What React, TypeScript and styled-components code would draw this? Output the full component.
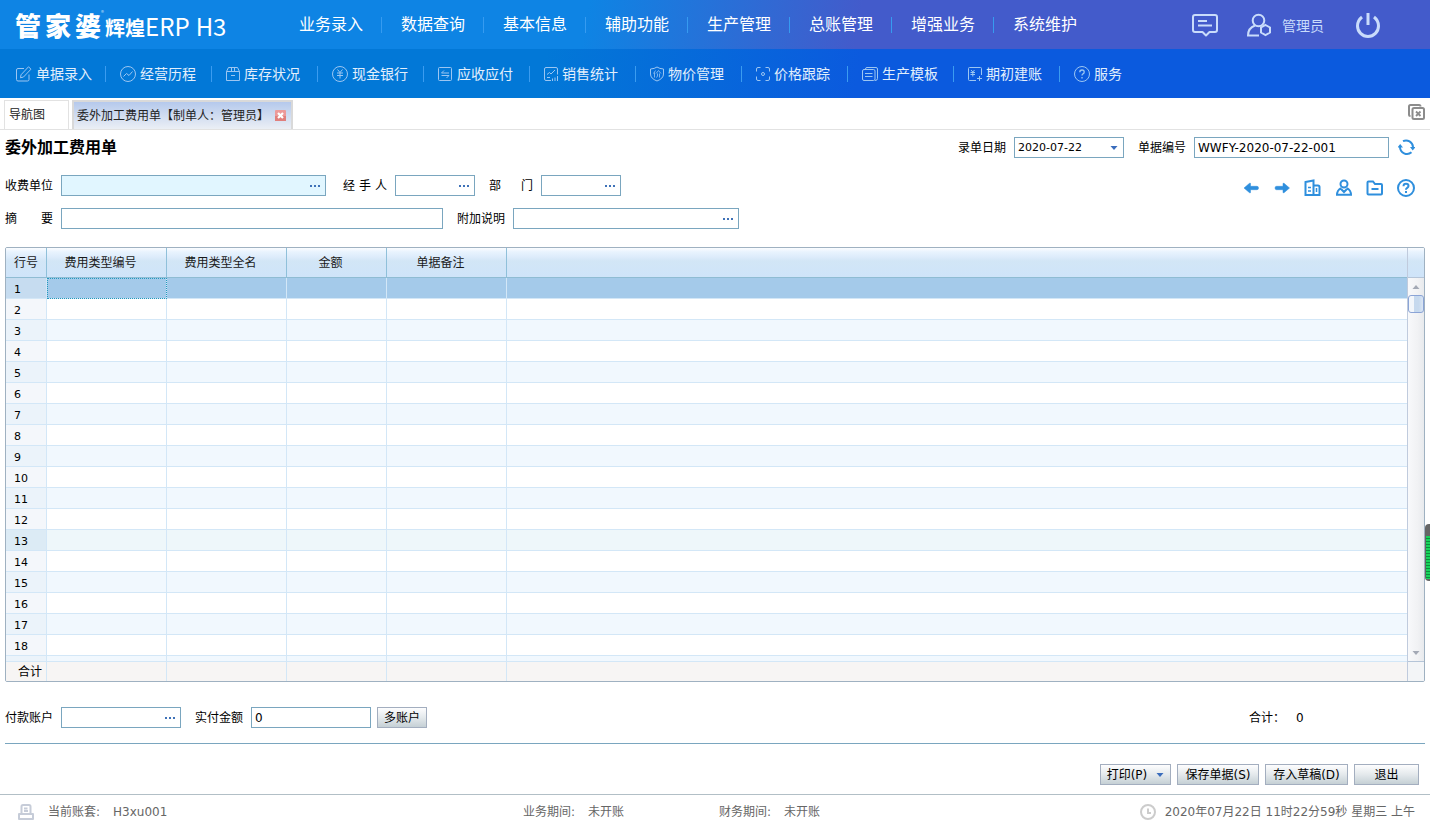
import React from "react";
import styled, { createGlobalStyle } from "styled-components";

const GlobalStyle = createGlobalStyle`
  * { box-sizing: border-box; }
  html, body { margin: 0; padding: 0; background: #fff; }
  body, button, input, select, table {
    font-family: "DejaVu Sans", "Noto Sans CJK SC", sans-serif;
    font-size: 12px;
    line-height: 16px;
    color: #000;
  }
  body { overflow-x: hidden; }
  button, input, select { margin: 0; border-radius: 0; }
  button { cursor: pointer; }
  svg { display: block; flex: none; }
`;

const Page = styled.div`
  display: flex;
  flex-direction: column;
  min-height: 100vh;
`;

/* ---------- header ---------- */
const TopBar = styled.header`
  display: flex;
  align-items: center;
  height: 49px;
  background: linear-gradient(100deg, #0e84e4 0%, #0e84e4 41%, #435bcb 60%, #435bcb 100%);
`;

const Logo = styled.h1`
  display: flex;
  align-items: center;
  width: 278px;
  margin: 0;
  padding-left: 15px;
  color: #fff;
  font-family: "Noto Sans CJK SC", sans-serif;
  font-weight: 400;
  line-height: 32px;
  white-space: nowrap;
`;

const Brand = styled.span`
  display: flex;
  gap: 4px;
  font-size: 26px;
  font-weight: 900;
`;

const Registered = styled.sup`
  align-self: flex-start;
  width: 4px;
  font-size: 6px;
  line-height: 16px;
  opacity: 0.7;
`;

const Product = styled.span`
  display: flex;
  align-items: baseline;
  padding-top: 5px;
  font-size: 24px;
`;

const ProductCjk = styled.span`
  font-size: 20px;
  font-weight: 700;
`;

const Edition = styled.span`
  margin-left: 6px;
`;

const MainNav = styled.nav`
  display: flex;
  padding-bottom: 3px;
`;

const MainLink = styled.a`
  position: relative;
  width: 102px;
  padding-left: 21px;
  color: #fff;
  font-family: "Noto Sans CJK SC", sans-serif;
  font-size: 16px;
  line-height: 24px;
  text-decoration: none;
  white-space: nowrap;

  & + &::before {
    content: "";
    position: absolute;
    left: 1px;
    top: 6px;
    width: 1px;
    height: 16px;
    background: #369bf0;
  }
`;

const UserTools = styled.div`
  display: flex;
  align-items: center;
  margin-left: auto;
  padding-right: 49px;
`;

const UserButton = styled.button<{ $gap?: number }>`
  display: flex;
  align-items: center;
  gap: 10px;
  margin-left: ${(p) => p.$gap ?? 0}px;
  padding: 0;
  border: 0;
  background: none;
  color: #c9dcfb;
  font-family: "Noto Sans CJK SC", sans-serif;
  font-size: 14px;
  line-height: 24px;
`;

const SubNav = styled.nav`
  display: flex;
  align-items: center;
  height: 49px;
  background: linear-gradient(100deg, #0278d7 0%, #0278d7 38%, #0b5ade 60%, #0b5ade 100%);
`;

const SubLink = styled.a`
  position: relative;
  display: flex;
  align-items: center;
  gap: 4px;
  width: 106px;
  padding-left: 15px;
  color: #e2effc;
  font-family: "Noto Sans CJK SC", sans-serif;
  font-size: 14px;
  line-height: 22px;
  padding-bottom: 2px;
  text-decoration: none;
  white-space: nowrap;

  svg { position: relative; top: 1px; color: #9cc6f2; }

  &:first-child { width: 105px; }

  & + &::before {
    content: "";
    position: absolute;
    left: 0;
    top: 4px;
    width: 1px;
    height: 16px;
    background: #3b9cf0;
  }
`;

/* ---------- tabs ---------- */
const TabBar = styled.div`
  display: flex;
  align-items: flex-end;
  gap: 3px;
  height: 32px;
  padding-left: 4px;
  border-bottom: 1px solid #e2e2e2;
`;

const Tab = styled.div<{ $active?: boolean }>`
  display: flex;
  align-items: center;
  gap: 6px;
  height: 29px;
  min-width: 65px;
  padding: 0 5px 0 4px;
  border: ${(p) => (p.$active ? "2px solid #d9d9d9" : "1px solid #e2e2e2")};
  border-bottom: 0;
  background: ${(p) => (p.$active ? "linear-gradient(#b5c9ec, #ebeff5)" : "#fff")};
  ${(p) => p.$active && "padding-left: 3px;"}
`;

const TabLabel = styled.button`
  padding: 0;
  border: 0;
  background: none;
  color: #222;
  white-space: nowrap;
`;

const IconButton = styled.button`
  display: flex;
  padding: 0;
  border: 0;
  background: none;
  color: #2f8fdd;
`;

const CloseAll = styled(IconButton)`
  margin: 0 5px 9px auto;
  color: #8c8c8c;
`;

/* ---------- form ---------- */
const Main = styled.main`
  display: flex;
  flex-direction: column;
  padding: 0 5px;
`;

const TitleRow = styled.div`
  display: flex;
  align-items: center;
  height: 35px;
`;

const Title = styled.h2`
  margin: 0 auto 0 0;
  font-size: 16px;
  line-height: 24px;
  font-weight: 700;
`;

const FormRow = styled.div<{ $top?: number }>`
  display: flex;
  align-items: center;
  height: 21px;
  margin-top: ${(p) => p.$top ?? 12}px;
`;

const Field = styled.div<{ $gap?: number }>`
  display: flex;
  align-items: center;
  gap: 8px;
  margin-right: ${(p) => p.$gap ?? 0}px;
`;

const Label = styled.label<{ $width?: number }>`
  width: ${(p) => p.$width ?? 48}px;
  white-space: nowrap;
  text-align: justify;
  text-align-last: justify;
`;

const Box = styled.div<{ $width: number; $required?: boolean }>`
  display: flex;
  align-items: center;
  width: ${(p) => p.$width}px;
  height: 21px;
  border: 1px solid #7aa6bf;
  background: ${(p) => (p.$required ? "#e1f6ff" : "#fff")};
`;

const TextInput = styled.input`
  flex: 1;
  min-width: 0;
  height: 19px;
  padding: 0 3px;
  border: 0;
  outline: 0;
  background: transparent;
`;

const LookupButton = styled.button`
  display: flex;
  align-items: center;
  height: 19px;
  padding: 0 5px 0 3px;
  border: 0;
  background: none;
`;

const DateSelect = styled.select`
  flex: 1;
  min-width: 0;
  height: 19px;
  padding: 0 3px;
  border: 0;
  outline: 0;
  appearance: none;
  font-size: 11px;
  background: transparent;
`;

const ArrowSlot = styled.span`
  padding: 0 5px;
`;

const Tools = styled.div`
  display: flex;
  align-items: center;
  gap: 11px;
  margin-left: auto;
  padding: 4px 9px 0 0;
`;

/* ---------- grid ---------- */
const GridFrame = styled.div`
  display: flex;
  margin-top: 18px;
  border: 1px solid #9fb1c1;
  border-radius: 2px;
  overflow: hidden;
`;

const headerFill = "linear-gradient(#fbfdff 0px, #e8f3fe 4px, #ddecfb 9px, #d2e6f6 13px, #cfe4f9 28px)";

const Grid = styled.table`
  flex: 1;
  min-width: 0;
  table-layout: fixed;
  border-collapse: separate;
  border-spacing: 0;

  th, td { padding: 0; border-right: 1px solid #d3e7f7; }
  tr > :last-child { border-right: 0; }
`;

const HeadCell = styled.th`
  height: 30px;
  background: ${headerFill};
  border-bottom: 1px solid #8fbcd3;
  color: #1a1a1a;
  font-weight: 400;

  ${Grid} &&:not(:last-child) { border-right-color: #8fc0da; }
  ${Grid} &&:not(:first-child) { padding-right: 12px; }
`;

const rowFill = { plain: "#fff", alt: "#f1f8fe", hover: "#eef7fa", selected: "#a4caea" };
const numberFill = { plain: "#f4f7fb", alt: "#ebf3fa", hover: "#dcebf5", selected: "#c6dcf0" };
type Tone = keyof typeof rowFill;

const Row = styled.tr<{ $tone: Tone; $short?: boolean }>`
  height: ${(p) => (p.$short ? 6 : 21)}px;
  background: ${(p) => rowFill[p.$tone]};

  td, th { border-bottom: 1px solid #d3e7f7; }
  th {
    background: ${(p) => numberFill[p.$tone]};
    padding: 4px 0 0 8px;
    font-size: 11px;
    line-height: 16px;
    font-weight: 400;
    text-align: left;
  }
  ${(p) => p.$short && "th { padding: 0; }"}
`;

const Cell = styled.td<{ $focus?: boolean }>`
  ${(p) => p.$focus && "outline: 1px dotted #2399bd; outline-offset: -1px;"}
`;

const SumRow = styled.tr`
  height: 19px;
  background: #f7f5f4;
  th { padding-left: 8px; font-weight: 400; text-align: center; line-height: 18px; }
`;

const ScrollColumn = styled.div`
  display: flex;
  flex-direction: column;
  width: 17px;
  border-left: 1px solid #c0cbdd;
`;

const ScrollHead = styled.div`
  height: 30px;
  background: ${headerFill};
  border-bottom: 1px solid #b5c5d8;
`;

const ScrollTrack = styled.div`
  display: flex;
  flex-direction: column;
  flex: 1;
  background: linear-gradient(90deg, #f8f9fb, #f1f2f4 60%, #e8eaed);
`;

const ScrollButton = styled.button<{ $end?: boolean }>`
  display: flex;
  align-items: center;
  justify-content: center;
  height: 17px;
  margin-top: ${(p) => (p.$end ? "auto" : "0")};
  padding: 0;
  border: 0;
  background: none;
`;

const Thumb = styled.div`
  height: 18px;
  border: 1px solid #8ba4d6;
  border-radius: 3px;
  background: linear-gradient(90deg, #f2f6fb 0 35%, #c6d9ee 36% 70%, #dbe6f4);
`;

const ScrollFoot = styled.div`
  height: 20px;
  border-top: 1px solid #b5c5d8;
  background: #f3f5f7;
`;

/* ---------- payment and actions ---------- */
const Total = styled.div`
  display: flex;
  gap: 11px;
  width: 176px;
  margin-left: auto;
`;

const Divider = styled.hr`
  width: 100%;
  height: 1px;
  margin: 15px 0 20px;
  border: 0;
  background: #7aa6bf;
`;

const PushButton = styled.button<{ $width: number }>`
  display: flex;
  align-items: center;
  justify-content: center;
  gap: 9px;
  width: ${(p) => p.$width}px;
  height: 21px;
  padding: 0;
  border: 1px solid #a3aebf;
  background: linear-gradient(#fdfdfe, #e4e9ec 50%, #c5d0d5);
  white-space: nowrap;
`;

const Actions = styled.div`
  display: flex;
  justify-content: flex-end;
  gap: 6px;
  padding-right: 6px;
`;

const StatusBar = styled.footer`
  display: grid;
  grid-template-columns: 523px 196px 1fr auto;
  align-items: center;
  height: 33px;
  margin-top: 9px;
  padding-top: 2px;
  border-top: 1px solid #b2bfc6;
  color: #666;
`;

const Status = styled.div<{ $inset?: boolean }>`
  display: flex;
  align-items: center;
  gap: 13px;
  ${(p) => p.$inset && "padding-left: 18px;"}
  svg { color: #c6ccd8; margin-right: 1px; }
`;

const Clock = styled.div`
  display: flex;
  align-items: center;
  gap: 9px;
  padding-right: 15px;
  svg { color: #ccc; }
`;

const Meter = styled.div`
  position: fixed;
  right: 0;
  top: 524px;
  width: 5px;
  height: 57px;
  padding: 12px 0 2px 1px;
  border-radius: 4px 0 0 4px;
  background: #666;
`;

const MeterFill = styled.div`
  height: 100%;
  background: repeating-linear-gradient(#18d45c 0 2px, #0a8f3d 2px 3px);
`;

/* ---------- icons ---------- */
type IconProps = { w?: number; h?: number; vb?: string; sw?: number; children: React.ReactNode };
const Icon = ({ w = 16, h = 16, vb, sw = 1, children }: IconProps) => (
  <svg width={w} height={h} viewBox={vb ?? `0 0 ${w} ${h}`} fill="none" stroke="currentColor" strokeWidth={sw} aria-hidden="true">
    {children}
  </svg>
);

const Dots = () => (
  <svg width="10" height="2" viewBox="0 0 10 2" fill="#3f72b8" aria-hidden="true">
    <rect width="2" height="2" /><rect x="4" width="2" height="2" /><rect x="8" width="2" height="2" />
  </svg>
);

const Caret = ({ up, color = "#3a6cbc" }: { up?: boolean; color?: string }) => (
  <svg width="8" height="4" viewBox="0 0 8 4" fill={color} aria-hidden="true">
    <path d={up ? "M0.5 4L4 0L7.5 4Z" : "M0.5 0L4 4L7.5 0Z"} />
  </svg>
);

const subItems: [string, React.ReactNode][] = [
  ["单据录入", <Icon w={17}><path d="M9 2.500H3Q1.500 2.500 1.500 4V13.500Q1.500 15 3 15H12.500Q14 15 14 13.500V8.500M13.500 .8L16 3.200L8.500 11L5.500 11.800L6 8.800Z" /></Icon>],
  ["经营历程", <Icon><circle cx="8" cy="8" r="7.500" /><path d="M3.500 10.500L6.500 7.500L9 9.500L12.500 5.500" /></Icon>],
  ["库存状况", <Icon w={14}><path d="M.5 5.500L2.500 1.500H11.500L13.500 5.500V14.500H.5ZM.5 5.500H13.500M5.500 1.500V5.500M8.500 1.500V5.500M5 9.500H9" /></Icon>],
  ["现金银行", <Icon><circle cx="8" cy="8" r="7.500" /><path d="M5.500 3.500L8 6.500L10.500 3.500M5 7H11M5 9.500H11M8 6.500V12.500" /></Icon>],
  ["应收应付", <Icon w={15}><rect x=".5" y="1.500" width="13" height="13" rx="1" /><path d="M11 7H3.500L6 4.500M3.500 9.500H11L8.500 12" /></Icon>],
  ["销售统计", <Icon w={14}><path d="M7 14.500H2Q.5 14.500 .5 13V3Q.5 1.500 2 1.500H12Q13.500 1.500 13.500 3V8.500M3 8.500L5.500 6.500L7 8L11 4M3 11.500H6M8.500 15V12.500M11 15V11.500M13.500 15V10" /></Icon>],
  ["物价管理", <Icon w={14}><path d="M7 1Q9.500 2.800 13.500 3V8Q13.500 12.500 7 15Q.5 12.500 .5 8V3Q4.500 2.800 7 1Z" /><path d="M5.500 4.500L3.500 7.500M4.500 6.500V11.500M8.500 4.500L6 7.500M8.500 4.500L11 7.500M7.500 7.500V10L6.500 11.500M9.500 7.500V11.500" strokeWidth=".8" /></Icon>],
  ["价格跟踪", <Icon w={14}><path d="M.5 5.500V3Q.5 1.500 2 1.500H4.500M9.500 1.500H12Q13.500 1.500 13.500 3V5.500M13.500 10.500V13Q13.500 14.500 12 14.500H9.500M4.500 14.500H2Q.5 14.500 .5 13V10.500" /><circle cx="7" cy="8" r="1.500" /></Icon>],
  ["生产模板", <Icon><path d="M3.500 3.500V3Q3.500 1.500 5 1.500H14Q15.500 1.500 15.500 3V12.500Q15.500 14.500 13 14.500" /><rect x=".5" y="3.500" width="12.500" height="11" rx="1.500" /><path d="M3 7.500H10.500M3 10.500H10.500" /></Icon>],
  ["期初建账", <Icon w={14}><path d="M8 14.500H1.500Q.5 14.500 .5 13.500V2.500Q.5 1.500 1.500 1.500H12.500Q13.500 1.500 13.500 2.500V9M3 4L4.800 6L6.500 4M2.500 6.500H7M2.500 8.500H7M4.800 6V10.500M9 12.500H14M11.500 10V15" /></Icon>],
  ["服务", <Icon><circle cx="8" cy="8" r="7.500" /><path d="M5.800 6.200Q5.800 4 8 4Q10.200 4 10.200 6Q10.200 7.200 9 7.800Q8 8.400 8 9.600M8 11V12.500" strokeWidth="1.300" /></Icon>],
];

const mainItems = ["业务录入", "数据查询", "基本信息", "辅助功能", "生产管理", "总账管理", "增强业务", "系统维护"];

const Lookup = ({ id, width, required, label }: { id: string; width: number; required?: boolean; label: string }) => (
  <Box $width={width} $required={required}>
    <TextInput id={id} />
    <LookupButton type="button" aria-label={`选择${label}`}><Dots /></LookupButton>
  </Box>
);

const toneOf = (n: number): Tone => (n === 1 ? "selected" : n === 13 ? "hover" : n % 2 ? "alt" : "plain");

export default function App() {
  return (
    <Page>
      <GlobalStyle />
      <TopBar>
        <Logo>
          <Brand><span>管</span><span>家</span><span>婆</span></Brand>
          <Registered>®</Registered>
          <Product><ProductCjk>辉煌</ProductCjk>ERP<Edition>H3</Edition></Product>
        </Logo>
        <MainNav>{mainItems.map((t) => <MainLink href="#" key={t}>{t}</MainLink>)}</MainNav>
        <UserTools>
          <UserButton type="button" aria-label="消息">
            <Icon w={26} h={24} sw={2}><path d="M3 2H23Q25 2 25 4V17Q25 19 23 19H17.500L14 22.500L10.500 19H3Q1 19 1 17V4Q1 2 3 2ZM6 8H15M6 12.500H20" strokeLinejoin="round" /></Icon>
          </UserButton>
          <UserButton type="button" $gap={28}>
            <Icon w={26} h={24} sw={2}><circle cx="12.500" cy="7.500" r="5.800" /><path d="M9 12.500Q2 15 2 22.500H13M19.500 12L24 14.500V19.500L19.500 22L15 19.500V14.500Z" /></Icon>
            管理员
          </UserButton>
          <UserButton type="button" $gap={31} aria-label="退出系统">
            <Icon w={26} h={26} sw={3}><path d="M7 5Q2.500 8.500 2.500 14A10.500 10.500 0 0 0 23.500 14Q23.500 8.500 19 5M13 1V13" /></Icon>
          </UserButton>
        </UserTools>
      </TopBar>
      <SubNav>
        {subItems.map(([t, icon]) => <SubLink href="#" key={t}>{icon}{t}</SubLink>)}
      </SubNav>

      <TabBar>
        <Tab><TabLabel type="button">导航图</TabLabel></Tab>
        <Tab $active>
          <TabLabel type="button">委外加工费用单【制单人：管理员】</TabLabel>
          <IconButton type="button" aria-label="关闭">
            <svg width="11" height="11" viewBox="0 0 11 11" aria-hidden="true">
              <rect width="11" height="11" rx="1" fill="#ec9a9a" /><rect y="6" width="11" height="5" fill="#e07f7c" />
              <path d="M3 3L8 8M8 3L3 8" stroke="#fff" strokeWidth="2.200" />
            </svg>
          </IconButton>
        </Tab>
        <CloseAll type="button" aria-label="关闭全部">
          <Icon w={17} sw={2}><path d="M2.500 12Q1 12 1 10.500V2.500Q1 1 2.500 1H11Q12.500 1 12.500 2.500" /><rect x="4.500" y="4" width="11.500" height="11" rx="1.500" /><path d="M8 7.500L12.500 12M12.500 7.500L8 12" strokeWidth="1.800" /></Icon>
        </CloseAll>
      </TabBar>

      <Main>
        <TitleRow>
          <Title>委外加工费用单</Title>
          <Field $gap={14}>
            <Label htmlFor="date">录单日期</Label>
            <Box $width={110}>
              <DateSelect id="date" defaultValue="2020-07-22"><option>2020-07-22</option></DateSelect>
              <ArrowSlot><Caret /></ArrowSlot>
            </Box>
          </Field>
          <Field $gap={9}>
            <Label htmlFor="code">单据编号</Label>
            <Box $width={195}><TextInput id="code" defaultValue="WWFY-2020-07-22-001" /></Box>
          </Field>
          <Field $gap={10}>
            <IconButton type="button" aria-label="刷新">
              <Icon w={17} h={17} sw={2}><path d="M5 2.200A7 7 0 0 1 15 8M13.500 13.300A7 7 0 0 1 2 8" /><path d="M12 8H17.500L14.700 11.500ZM-.5 8.500H5L2.200 5Z" fill="currentColor" stroke="none" /></Icon>
            </IconButton>
          </Field>
        </TitleRow>

        <FormRow $top={10}>
          <Field $gap={17}><Label htmlFor="payee">收费单位</Label><Lookup id="payee" label="收费单位" width={265} required /></Field>
          <Field $gap={14}><Label htmlFor="handler" $width={44}>经 手 人</Label><Lookup id="handler" label="经手人" width={80} /></Field>
          <Field><Label htmlFor="dept" $width={44}>部 门</Label><Lookup id="dept" label="部门" width={80} /></Field>
          <Tools>
            <IconButton type="button" aria-label="上一张"><Icon w={20} h={18}><path d="M3 9L8.500 4.300H9.500V7.300H16Q17.500 7.300 17.500 9Q17.500 10.700 16 10.700H9.500V13.700H8.500Z" fill="currentColor" strokeWidth=".5" /></Icon></IconButton>
            <IconButton type="button" aria-label="下一张"><Icon w={20} h={18}><path d="M17.500 9L12 4.300H11V7.300H4.500Q3 7.300 3 9Q3 10.700 4.500 10.700H11V13.700H12Z" fill="currentColor" strokeWidth=".5" /></Icon></IconButton>
            <IconButton type="button" aria-label="单位"><Icon w={20} h={18} sw={2}><path d="M2.500 3L10.500 1.500V16H2.500ZM10.500 6.500H15Q16.500 6.500 16.500 8V16H10.500" /><path d="M5 8.500H8M5 12H8M13.500 9V13" strokeWidth="1.500" /></Icon></IconButton>
            <IconButton type="button" aria-label="职员"><Icon w={20} h={18} sw={2}><circle cx="10" cy="5" r="3.500" /><path d="M7 9Q3 11.500 3 15.800H17Q17 11.500 13 9M7 10L10 13L13 10" /></Icon></IconButton>
            <IconButton type="button" aria-label="部门资料"><Icon w={20} h={18} sw={2}><path d="M3.500 2.500H8L10 5H16Q17 5 17 6V14.500Q17 15.500 16 15.500H3.500Q2.500 15.500 2.500 14.500V3.500Q2.500 2.500 3.500 2.500ZM6.500 10H13.500" /></Icon></IconButton>
            <IconButton type="button" aria-label="帮助"><Icon w={20} h={18} sw={2}><circle cx="10" cy="9" r="8" /><path d="M7.500 7.200Q7.500 4.800 10 4.800Q12.500 4.800 12.500 7Q12.500 8.200 11 9Q10 9.600 10 10.800M10 12V14" /></Icon></IconButton>
          </Tools>
        </FormRow>
        <FormRow>
          <Field $gap={14}><Label htmlFor="summary">摘 要</Label><Box $width={382}><TextInput id="summary" /></Box></Field>
          <Field><Label htmlFor="note">附加说明</Label><Lookup id="note" label="附加说明" width={226} /></Field>
        </FormRow>

        <GridFrame>
          <Grid>
            <colgroup>
              <col style={{ width: 41 }} /><col style={{ width: 120 }} /><col style={{ width: 120 }} />
              <col style={{ width: 100 }} /><col style={{ width: 120 }} /><col />
            </colgroup>
            <thead>
              <tr>
                {["行号", "费用类型编号", "费用类型全名", "金额", "单据备注", ""].map((h, i) => <HeadCell key={i} scope="col">{h}</HeadCell>)}
              </tr>
            </thead>
            <tbody>
              {Array.from({ length: 18 }, (_, i) => i + 1).map((n) => (
                <Row key={n} $tone={toneOf(n)}>
                  <th scope="row">{n}</th>
                  <Cell $focus={n === 1} /><Cell /><Cell /><Cell /><Cell />
                </Row>
              ))}
              <Row $tone="alt" $short aria-hidden="true"><th /><Cell /><Cell /><Cell /><Cell /><Cell /></Row>
            </tbody>
            <tfoot>
              <SumRow><th scope="row">合计</th><td /><td /><td /><td /><td /></SumRow>
            </tfoot>
          </Grid>
          <ScrollColumn>
            <ScrollHead />
            <ScrollTrack>
              <ScrollButton type="button" aria-label="向上滚动"><Caret up color="#a3a9b5" /></ScrollButton>
              <Thumb />
              <ScrollButton type="button" $end aria-label="向下滚动"><Caret color="#a3a9b5" /></ScrollButton>
            </ScrollTrack>
            <ScrollFoot />
          </ScrollColumn>
        </GridFrame>

        <FormRow $top={25}>
          <Field $gap={14}><Label htmlFor="account">付款账户</Label><Lookup id="account" label="付款账户" width={120} /></Field>
          <Field $gap={6}><Label htmlFor="paid">实付金额</Label><Box $width={120}><TextInput id="paid" defaultValue="0" /></Box></Field>
          <PushButton type="button" $width={50}>多账户</PushButton>
          <Total><span>合计：</span><output>0</output></Total>
        </FormRow>
        <Divider />
        <Actions>
          <PushButton type="button" $width={71}>打印(P)<Caret /></PushButton>
          <PushButton type="button" $width={82}>保存单据(S)</PushButton>
          <PushButton type="button" $width={83}>存入草稿(D)</PushButton>
          <PushButton type="button" $width={65}>退出</PushButton>
        </Actions>
      </Main>

      <StatusBar>
        <Status $inset>
          <Icon sw={2}><path d="M3.500 9V2.500Q3.500 1 5 1H11Q12.500 1 12.500 2.500V9M6 4.500H9.500M6 7H10M1 10H15V15H1Z" strokeLinejoin="round" /></Icon>
          <span>当前账套:</span><span>H3xu001</span>
        </Status>
        <Status><span>业务期间:</span><span>未开账</span></Status>
        <Status><span>财务期间:</span><span>未开账</span></Status>
        <Clock>
          <Icon sw={2}><circle cx="8" cy="8" r="7" /><path d="M8 4.500V9H11" /></Icon>
          <time dateTime="2020-07-22T11:22:59">2020年07月22日 11时22分59秒 星期三 上午</time>
        </Clock>
      </StatusBar>
      <Meter aria-hidden="true"><MeterFill /></Meter>
    </Page>
  );
}
